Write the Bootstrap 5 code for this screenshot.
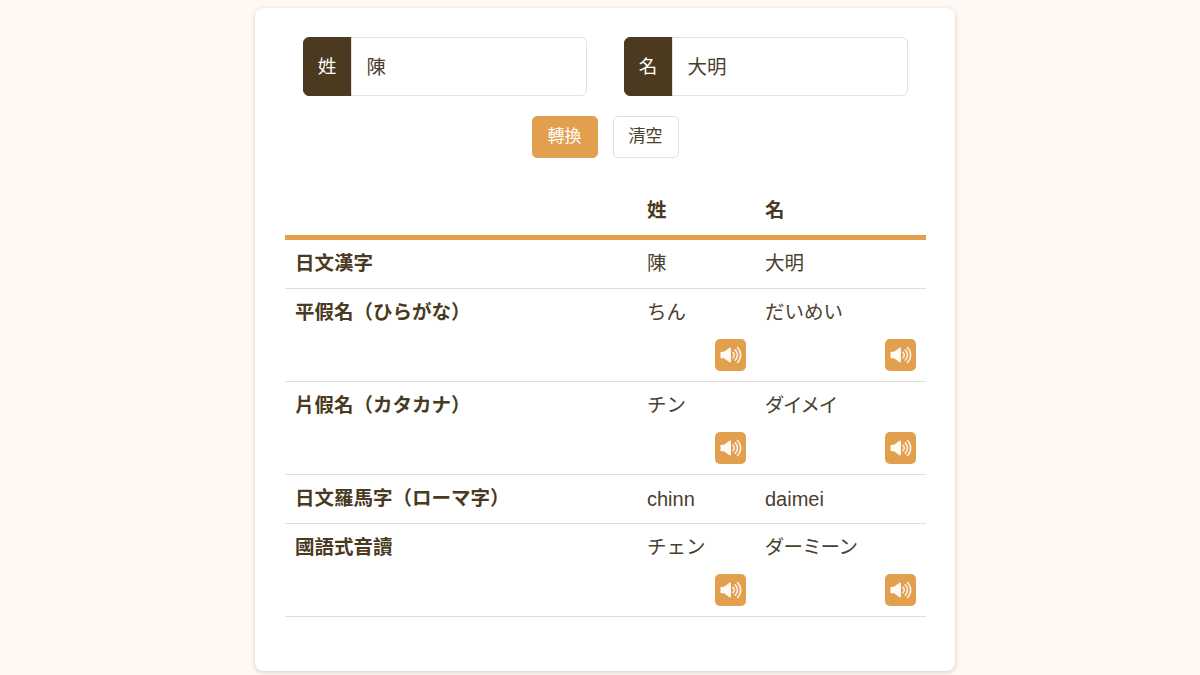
<!DOCTYPE html>
<html lang="zh-Hant">
<head>
<meta charset="utf-8">
<title>姓名轉換</title>
<link rel="stylesheet" href="https://cdn.jsdelivr.net/npm/bootstrap@5.3.0/dist/css/bootstrap.min.css">
<style>
html,body{height:675px;overflow:hidden}
body{background:#fff8f3;color:#4a3a22;font-family:"Liberation Sans","Noto Sans CJK TC",sans-serif;font-size:19.5px;padding:8px 0 0 10px}
.sheet{width:700px;height:663px;margin:0 auto;background:#fff;border-radius:8px;box-shadow:0 1px 4px rgba(90,70,40,.25);padding:29px 30px 0 30px}
.name-row{gap:37px}
.name-group{width:284px;height:59px;flex-wrap:nowrap}
.name-group .input-group-text{width:49px;justify-content:center;background:#4c3a20;border-color:#4c3a20;color:#fff;font-size:18.5px;padding:0;border-radius:6px 0 0 6px}
.name-group .form-control{font-size:19.5px;color:#4a4030;padding:2px 15px 0;border-color:#e2e2e2;border-radius:0 6px 6px 0}
.action-row{gap:15px;margin-top:20px;margin-bottom:28px}
.act{width:66px;height:42px;font-size:17px;padding:0;border-radius:5px;line-height:40px}
.act-main{background:#e2a04f;border-color:#e2a04f;color:#fff}
.act-plain{background:#fff;border-color:#e0e0e0;color:#4a4030}
.kana-table{width:641px;table-layout:fixed;margin:0;--bs-table-color:#4a3a22;--bs-table-bg:transparent;border-color:#dedede}
.kana-table th,.kana-table td{padding:9px 10px 11px;line-height:28px;font-size:19.5px;color:#4a4030;vertical-align:top}
.kana-table th{color:#4a3a22}
.kana-table thead th{border-bottom:5px solid #e2a04f;padding:10px 10px 11px}
.kana-table>tbody>tr>*{border-bottom:1px solid #dedede}
.kana-table>thead{border-bottom:0}
.kana-table td.latin-cell{padding-top:10px;padding-bottom:10px;font-size:20px}
.kana-table td.kana-tight{font-feature-settings:"palt";letter-spacing:.8px}
.col-label{width:352px}
.col-sur{width:118px}
.say{display:flex;justify-content:center;align-items:center;width:31px;height:32px;margin:13px 0 -1px auto;padding:0;background:#e2a04f;border:0;border-radius:5px}
.kana-table td:nth-child(2) .say{margin-right:-1px}
</style>
</head>
<body>
<svg width="0" height="0" class="d-block" aria-hidden="true"><symbol id="spk" viewBox="0 0 24 20"><path d="M1.500 7.800c0-.6.4-1 1-1H5L10.500 2.800c.8-.5 1.400-.2 1.400.7v13c0 .9-.6 1.200-1.400.7L5 13.200H2.500c-.6 0-1-.4-1-1z" fill="#fff" opacity=".95"/><path d="M14 7.300a3.600 3.600 0 0 1 0 5.400M16.200 4.800a7.200 7.200 0 0 1 0 10.400M18.500 2.500a10.600 10.600 0 0 1 0 15" fill="none" stroke="#fff" stroke-width="1.600" stroke-linecap="round" opacity=".85"/></symbol></svg>
<main class="sheet">
  <div class="d-flex justify-content-center name-row">
    <div class="input-group name-group">
      <span class="input-group-text">姓</span>
      <input type="text" class="form-control" value="陳" aria-label="姓">
    </div>
    <div class="input-group name-group">
      <span class="input-group-text">名</span>
      <input type="text" class="form-control" value="大明" aria-label="名">
    </div>
  </div>
  <div class="d-flex justify-content-center action-row">
    <button type="button" class="btn act act-main">轉換</button>
    <button type="button" class="btn act act-plain">清空</button>
  </div>
  <table class="table kana-table">
    <colgroup><col class="col-label"><col class="col-sur"><col></colgroup>
    <thead>
      <tr><th></th><th>姓</th><th>名</th></tr>
    </thead>
    <tbody>
      <tr><th>日文漢字</th><td>陳</td><td>大明</td></tr>
      <tr><th>平假名（ひらがな）</th>
        <td>ちん<button type="button" class="say" aria-label="播放"><svg width="24" height="20"><use href="#spk"/></svg></button></td>
        <td>だいめい<button type="button" class="say" aria-label="播放"><svg width="24" height="20"><use href="#spk"/></svg></button></td></tr>
      <tr><th>片假名（カタカナ）</th>
        <td>チン<button type="button" class="say" aria-label="播放"><svg width="24" height="20"><use href="#spk"/></svg></button></td>
        <td class="kana-tight">ダイメイ<button type="button" class="say" aria-label="播放"><svg width="24" height="20"><use href="#spk"/></svg></button></td></tr>
      <tr><th>日文羅馬字（ローマ字）</th><td class="latin-cell">chinn</td><td class="latin-cell">daimei</td></tr>
      <tr><th>國語式音讀</th>
        <td>チェン<button type="button" class="say" aria-label="播放"><svg width="24" height="20"><use href="#spk"/></svg></button></td>
        <td class="kana-tight">ダーミーン<button type="button" class="say" aria-label="播放"><svg width="24" height="20"><use href="#spk"/></svg></button></td></tr>
    </tbody>
  </table>
</main>
<script src="https://cdn.jsdelivr.net/npm/bootstrap@5.3.0/dist/js/bootstrap.bundle.min.js"></script>
</body>
</html>
